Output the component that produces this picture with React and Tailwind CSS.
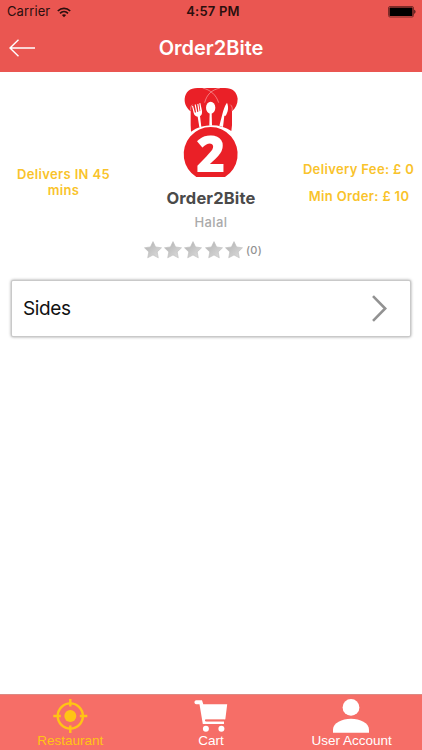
import { useState } from 'react';

const stars = [1, 2, 3, 4, 5];

const WifiIcon = () => (
  <svg width="14" height="11" viewBox="0 0 14 11" fill="none" stroke="#2b0f0e" strokeWidth="1.7">
    <path d="M0.8 4C4.4 0.4 9.6 0.4 13.2 4" />
    <path d="M3 6.3C5.3 4.1 8.7 4.1 11 6.3" />
    <path d="M7 10.3L4.9 8.1C6.1 7 7.9 7 9.1 8.1Z" fill="#2b0f0e" stroke="none" />
  </svg>
);

const BatteryIcon = () => (
  <svg width="28" height="12" viewBox="0 0 28 12">
    <rect x="0.5" y="0.5" width="25" height="10.5" rx="1.5" fill="none" stroke="#7d2b28" />
    <rect x="1.5" y="1.5" width="23" height="8.5" rx="0.5" fill="#000" />
    <path d="M26.3 3.8C27.8 4.2 27.8 7.3 26.3 7.7Z" fill="#2b0f0e" />
  </svg>
);

const Logo = () => (
  <svg width="56" height="91" viewBox="39 21 168 273" className="overflow-visible">
    {/* Chef hat */}
    <path
      d="M62 136V94C50 84 43 72 44 56C46 36 60 24 82 24H165C187 24 201 36 203 56C203 72 197 84 186 94V136L184 153C150 130 98 130 63 155Z"
      fill="#ea2027"
    />
    <g fill="none" stroke="#fff" strokeOpacity="0.6" strokeWidth="2">
      <path d="M98 24C122 30 138 44 146 68" />
      <path d="M150 24C124 30 110 44 104 68" />
      <path d="M62 92C61 84 63 78 67 74M181 74C186 78 188 84 186 92" />
    </g>
    {/* Fork, spoon and knife */}
    <g fill="#fff">
      <path d="M66 78L69 77L75 98L78 97L74 74L77 73L82 96L85 95L82 72L85 71L89 94L91 93L88 70L91 69L96 92C97 102 94 106 90 108L94 141H88L83 110C76 109 73 106 71 99Z" />
      <ellipse cx="122" cy="83" rx="14" ry="18" />
      <path d="M119 98H125L126 137H118Z" />
      <path d="M171 68C177 82 174 97 166 108L163 107L159 141L148 137L157 103C160 90 164 78 171 68Z" />
    </g>
    <path d="M79 291A81 81 0 1 1 165 291Z" fill="#ea2027" stroke="#fff" strokeWidth="6" paintOrder="stroke" />
    <text x="122" y="275" textAnchor="middle" fontSize="150" className="fill-white font-['Open_Sans',sans-serif] font-extrabold">2</text>
  </svg>
);

const Star = () => (
  <svg width="18" height="18" viewBox="0 0 18 18">
    <defs>
      <linearGradient id="star" x1="0" y1="0" x2="1" y2="1">
        <stop offset="0" stopColor="#b0b0b0" />
        <stop offset="1" stopColor="#dedede" />
      </linearGradient>
    </defs>
    <path
      d="M9 0.6L11.6 5.9L17.5 6.8L13.2 10.9L14.3 16.8L9 14L3.7 16.8L4.8 10.9L0.5 6.8L6.4 5.9Z"
      fill="url(#star)" stroke="#bdbdbd" strokeWidth="0.6" strokeLinejoin="round"
    />
  </svg>
);

const TargetIcon = () => (
  <svg width="36" height="36" viewBox="0 0 36 36" fill="none" stroke="currentColor" strokeWidth="2.4">
    <circle cx="18.3" cy="18" r="12.6" />
    <circle cx="18.3" cy="18" r="6" fill="currentColor" stroke="none" />
    <path d="M18.3 1V8.5M18.3 27.5V35M1.3 18H8.8M27.8 18H35.3" />
  </svg>
);

const CartIcon = () => (
  <svg width="36" height="36" viewBox="0 0 36 36" fill="currentColor">
    <path d="M3.2 2.3H9L10.3 6.2H34.2L32.4 20.8C32.3 21.4 32 21.6 31.4 21.6H12.4L12.7 23.4H31V26H9.8L6.5 6.3H3.2C0.9 6 0.9 2.6 3.2 2.3Z" />
    <path d="M12 22.4H31.5" stroke="#f66e67" strokeWidth="1.4" />
    <circle cx="12.9" cy="30.8" r="3" />
    <circle cx="28.4" cy="30.8" r="3" />
  </svg>
);

const UserIcon = () => (
  <svg width="36" height="36" viewBox="0 0 36 36" fill="currentColor" className="mr-px">
    <circle cx="18" cy="9.4" r="8.4" />
    <path d="M0 34.7V31.5C0 25 9 20.8 18 20.8S36 25 36 31.5V34.7Z" />
  </svg>
);

const tabs = [
  { id: 'restaurant', label: 'Restaurant', icon: TargetIcon },
  { id: 'cart', label: 'Cart', icon: CartIcon },
  { id: 'account', label: 'User Account', icon: UserIcon },
];

const App = () => {
  const [activeTab, setActiveTab] = useState('restaurant');

  return (
    <div className="flex h-[750px] w-[422px] flex-col overflow-hidden bg-white font-['Inter',sans-serif]">
      {/* Header */}
      <header className="h-[72px] shrink-0 bg-[#ea5651]">
        <div className="grid h-6 grid-cols-3 items-center pl-[7px] pr-[6px] text-[13px] text-[#2b0f0e]">
          <div className="flex items-center gap-[7px]">
            <span className="tracking-[0.1px]">Carrier</span>
            <WifiIcon />
          </div>
          <span className="pl-[3px] text-center font-semibold tracking-[0.2px]">4:57 PM</span>
          <div className="flex justify-end"><BatteryIcon /></div>
        </div>
        <div className="grid h-[47px] grid-cols-3 items-center">
          <button aria-label="Back" className="pl-[9px]">
            <svg width="26" height="18" viewBox="0 0 26 18" fill="none" stroke="#fff" strokeWidth="1.4">
              <path d="M9.5 0.7L1 9L9.5 17.3M1 9H26" />
            </svg>
          </button>
          <h1 className="text-center text-[20px] font-semibold text-white">Order2Bite</h1>
        </div>
      </header>

      {/* Restaurant info */}
      <section className="grid h-[207px] shrink-0 grid-cols-[126px_170px_126px] pt-[15px]">
        <p className="pl-px pt-[79px] text-center text-[13px] font-semibold leading-[16px] tracking-[0.35px] text-[#f9c32b]">
          Delivers IN 45<br />mins
        </p>
        <div className="flex flex-col items-center">
          <Logo />
          <h2 className="mt-[10px] text-[16.5px] font-bold leading-5 tracking-[0.15px] text-[#4a4a4a]">Order2Bite</h2>
          <p className="mt-1 text-[13px] font-medium leading-5 tracking-[0.4px] text-[#aaa]">Halal</p>
          <div className="mr-4 mt-[9px] flex items-center">
            <div className="flex gap-[2.3px]">
              {stars.map(star => <Star key={star} />)}
            </div>
            <span className="ml-[3px] text-[11px] font-medium tracking-[0.4px] text-[#929292]">(0)</span>
          </div>
        </div>
        <div className="pt-[74px] text-center text-[13px] font-semibold leading-[16px] tracking-[0.35px] text-[#f9c32b]">
          <p className="pr-px">Delivery Fee: £ 0</p>
          <p className="mt-[11px]">Min Order: £ 10</p>
        </div>
      </section>

      {/* Menu categories */}
      <main className="flex-1 px-[11px] pt-px">
        <button className="flex h-[57px] w-full items-center justify-between rounded-[2px] border border-[#c9c9c9] bg-white pl-[11px] pr-[23px] shadow-[0_0_3px_#999]">
          <span className="pt-[2px] text-[19px] tracking-[-0.4px] text-[#111]">Sides</span>
          <svg width="15" height="27" viewBox="0 0 15 27" fill="none" stroke="#929292" strokeWidth="2.6">
            <path d="M1 1.2L13.2 13.5L1 25.8" />
          </svg>
        </button>
      </main>

      {/* Bottom tabs */}
      <nav className="grid h-[56px] shrink-0 grid-cols-3 border-t border-[#dc8983] bg-[#f66e67] font-['Liberation_Sans',sans-serif]">
        {tabs.map(({ id, label, icon: Icon }) => (
          <button
            key={id}
            className={`flex flex-col items-center pt-[3px] text-[13.5px] leading-[14px] ${activeTab === id ? 'text-[#ffc414]' : 'text-white'}`}
            onClick={() => setActiveTab(id)}
          >
            <Icon />
            <span>{label}</span>
          </button>
        ))}
      </nav>
    </div>
  );
};

export default App;
